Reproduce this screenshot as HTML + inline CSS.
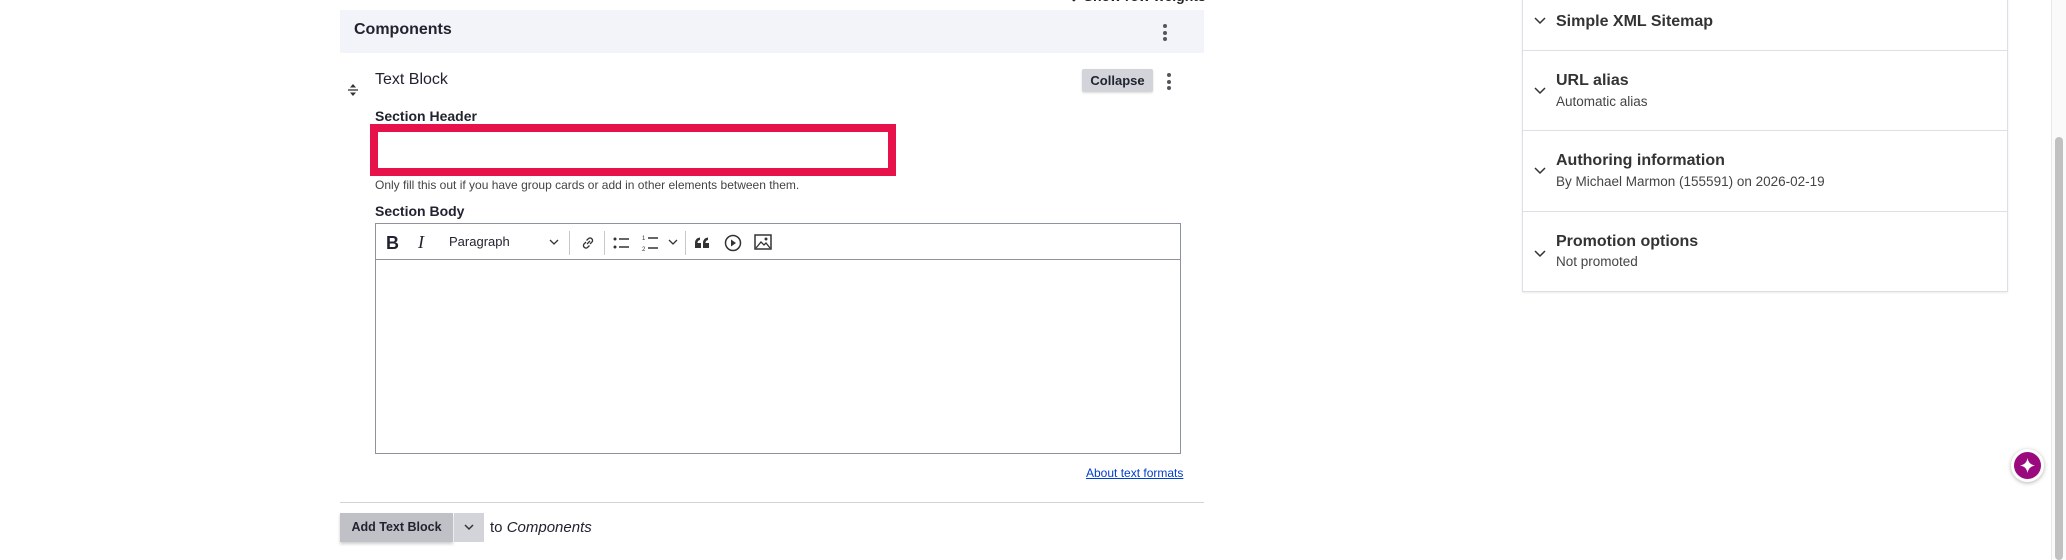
<!DOCTYPE html>
<html><head><meta charset="utf-8"><style>
*{box-sizing:border-box;margin:0;padding:0}
body{width:2066px;height:560px;overflow:hidden;background:#fff;font-family:"Liberation Sans",sans-serif;color:#222330;position:relative}
.a{position:absolute}
.kb{position:absolute;width:4px}
.kb i{display:block;width:4px;height:4px;border-radius:50%;background:#55565b;margin-bottom:2.5px}
.sep{position:absolute;top:231px;width:1px;height:24px;background:#c8c8cc}
</style></head><body>
<div class="a" style="left:1068px;top:-12px;font-size:14px;font-weight:bold;color:#222">⇕ Show row weights</div>
<div class="a" style="left:340px;top:10px;width:864px;height:43px;background:#f3f4f9"></div>
<div class="a" style="left:354px;top:21px;font-size:16px;font-weight:bold">Components</div>
<div class="kb" style="left:1163px;top:24px"><i></i><i></i><i></i></div>
<svg class="a" style="left:347px;top:83px" width="12" height="14"><path d="M6 1l3 3.5H3z M6 13l3-3.5H3z" fill="#333"/><path d="M1 7h10" stroke="#333" stroke-width="1.3"/></svg>
<div class="a" style="left:375px;top:71px;font-size:16px">Text Block</div>
<div class="a" style="left:1082px;top:69px;width:71px;height:23px;background:#d3d4d9;border-radius:2px;font-size:13px;font-weight:bold;text-align:center;line-height:23px;box-shadow:0 1px 2px rgba(0,0,0,.15)">Collapse</div>
<div class="kb" style="left:1167px;top:73px"><i></i><i></i><i></i></div>
<div class="a" style="left:375px;top:108px;font-size:14px;font-weight:bold">Section Header</div>
<div class="a" style="left:370px;top:124px;width:526px;height:52px;border:8px solid #e8124a;background:#fff"></div>
<div class="a" style="left:375px;top:178px;font-size:12px;color:#444">Only fill this out if you have group cards or add in other elements between them.</div>
<div class="a" style="left:375px;top:203px;font-size:14px;font-weight:bold">Section Body</div>
<div class="a" style="left:375px;top:223px;width:806px;height:231px;border:1px solid #8e929c"></div>
<div class="a" style="left:376px;top:259px;width:804px;height:1px;background:#8e929c"></div>
<div class="a" style="left:386px;top:233px;font-size:18px;font-weight:bold">B</div>
<div class="a" style="left:418px;top:232px;font-size:18px;font-family:'Liberation Serif',serif;font-style:italic">I</div>
<div class="a" style="left:449px;top:234px;font-size:13px">Paragraph</div>
<svg class="a" style="left:548px;top:238px" width="12" height="8"><path d="M2 2l4 4 4-4" stroke="#333" fill="none" stroke-width="1.3"/></svg>
<div class="sep" style="left:569px"></div>
<svg class="a" style="left:580px;top:235px" width="16" height="16"><path d="M7 9l3-3M6 7l-2 2a2.5 2.5 0 003.5 3.5l2-2M10 9l2-2A2.5 2.5 0 008.5 3.5l-2 2" stroke="#333" fill="none" stroke-width="1.3"/></svg>
<div class="sep" style="left:604px"></div>
<svg class="a" style="left:612px;top:235px" width="20" height="16"><circle cx="3" cy="4" r="1.5" fill="#333"/><circle cx="3" cy="12" r="1.5" fill="#333"/><path d="M7 4h10M7 12h10" stroke="#333" stroke-width="1.5"/></svg>
<svg class="a" style="left:642px;top:233px" width="20" height="20"><text x="0" y="7" font-size="6" fill="#333" font-family="Liberation Sans">1</text><text x="0" y="18" font-size="6" fill="#333" font-family="Liberation Sans">2</text><path d="M6 5h10M6 15h10" stroke="#333" stroke-width="1.5"/></svg>
<svg class="a" style="left:667px;top:238px" width="12" height="8"><path d="M2 2l4 4 4-4" stroke="#333" fill="none" stroke-width="1.3"/></svg>
<div class="sep" style="left:685px"></div>
<svg class="a" style="left:694px;top:236px" width="16" height="14"><path d="M1 12V7Q1 2 6 1.5V4Q3.5 4.5 3.5 7H7v5z M9 12V7Q9 2 14 1.5V4Q11.5 4.5 11.5 7H15v5z" fill="#333"/></svg>
<svg class="a" style="left:723px;top:233px" width="20" height="20"><circle cx="10" cy="10" r="7.5" stroke="#333" fill="none" stroke-width="1.5"/><path d="M8 6.5v7l5-3.5z" fill="#333"/></svg>
<svg class="a" style="left:754px;top:234px" width="18" height="17"><rect x="1" y="1" width="16" height="14" stroke="#333" fill="none" stroke-width="1.5"/><path d="M2 14l5-6 3 3 2-2 4 5" stroke="#333" fill="none" stroke-width="1.3"/><circle cx="12" cy="5" r="1.5" fill="#333"/></svg>
<div class="a" style="left:1086px;top:466px;font-size:12px;color:#003ecc;text-decoration:underline">About text formats</div>
<div class="a" style="left:340px;top:502px;width:864px;height:1px;background:#d3d4d9"></div>
<div class="a" style="left:340px;top:513px;width:113px;height:29px;background:#c0c1c6;font-size:12.5px;font-weight:bold;line-height:29px;text-align:center;box-shadow:0 2px 3px rgba(0,0,0,.2)">Add Text Block</div>
<div class="a" style="left:454px;top:513px;width:30px;height:29px;background:#d3d4d9"></div>
<svg class="a" style="left:463px;top:523px" width="12" height="8"><path d="M2 2l4 4 4-4" stroke="#333" fill="none" stroke-width="1.5"/></svg>
<div class="a" style="left:490px;top:519px;font-size:15px">to <i>Components</i></div>
<div class="a" style="left:1522px;top:-2px;width:486px;height:294px;border:1px solid #dedfe4;box-shadow:0 1px 2px rgba(0,0,0,.08)"></div>
<div class="a" style="left:1523px;top:50px;width:484px;height:1px;background:#dedfe4"></div>
<div class="a" style="left:1523px;top:130px;width:484px;height:1px;background:#dedfe4"></div>
<div class="a" style="left:1523px;top:211px;width:484px;height:1px;background:#dedfe4"></div>
<svg class="a" style="left:1533px;top:16px" width="14" height="10"><path d="M2 2l5 5 5-5" stroke="#333" fill="none" stroke-width="1.5"/></svg>
<svg class="a" style="left:1533px;top:86px" width="14" height="10"><path d="M2 2l5 5 5-5" stroke="#333" fill="none" stroke-width="1.5"/></svg>
<svg class="a" style="left:1533px;top:166px" width="14" height="10"><path d="M2 2l5 5 5-5" stroke="#333" fill="none" stroke-width="1.5"/></svg>
<div class="a" style="left:1533px;top:246px"><svg width="14" height="10"><path d="M2 2l5 5 5-5" stroke="#333" fill="none" stroke-width="1.5"/></svg></div>
<div class="a" style="left:1556px;top:13px;font-size:16px;font-weight:bold;color:#333">Simple XML Sitemap</div>
<div class="a" style="left:1556px;top:72px;font-size:16px;font-weight:bold;color:#333">URL alias</div>
<div class="a" style="left:1556px;top:94px;font-size:13.5px;color:#444">Automatic alias</div>
<div class="a" style="left:1556px;top:152px;font-size:16px;font-weight:bold;color:#333">Authoring information</div>
<div class="a" style="left:1556px;top:174px;font-size:13.5px;color:#444">By Michael Marmon (155591) on 2026-02-19</div>
<div class="a" style="left:1556px;top:233px;font-size:16px;font-weight:bold;color:#333">Promotion options</div>
<div class="a" style="left:1556px;top:254px;font-size:13.5px;color:#444">Not promoted</div>
<div class="a" style="left:2051px;top:0;width:15px;height:560px;background:#fafafa;border-left:1px solid #e8e8e8"></div>
<div class="a" style="left:2055px;top:137px;width:8px;height:423px;background:#c1c1c1;border-radius:4px"></div>
<div class="a" style="left:2011px;top:449px;width:33px;height:33px;border-radius:50%;background:#fff;box-shadow:0 1px 4px rgba(0,0,0,.3)"></div>
<div class="a" style="left:2014px;top:452px;width:27px;height:27px;border-radius:50%;background:#9a0a7e"></div>
<svg class="a" style="left:2019px;top:457px" width="17" height="17"><path d="M8.5 1Q9.5 7.5 16 8.5Q9.5 9.5 8.5 16Q7.5 9.5 1 8.5Q7.5 7.5 8.5 1z" fill="#fff"/></svg>
</body></html>
